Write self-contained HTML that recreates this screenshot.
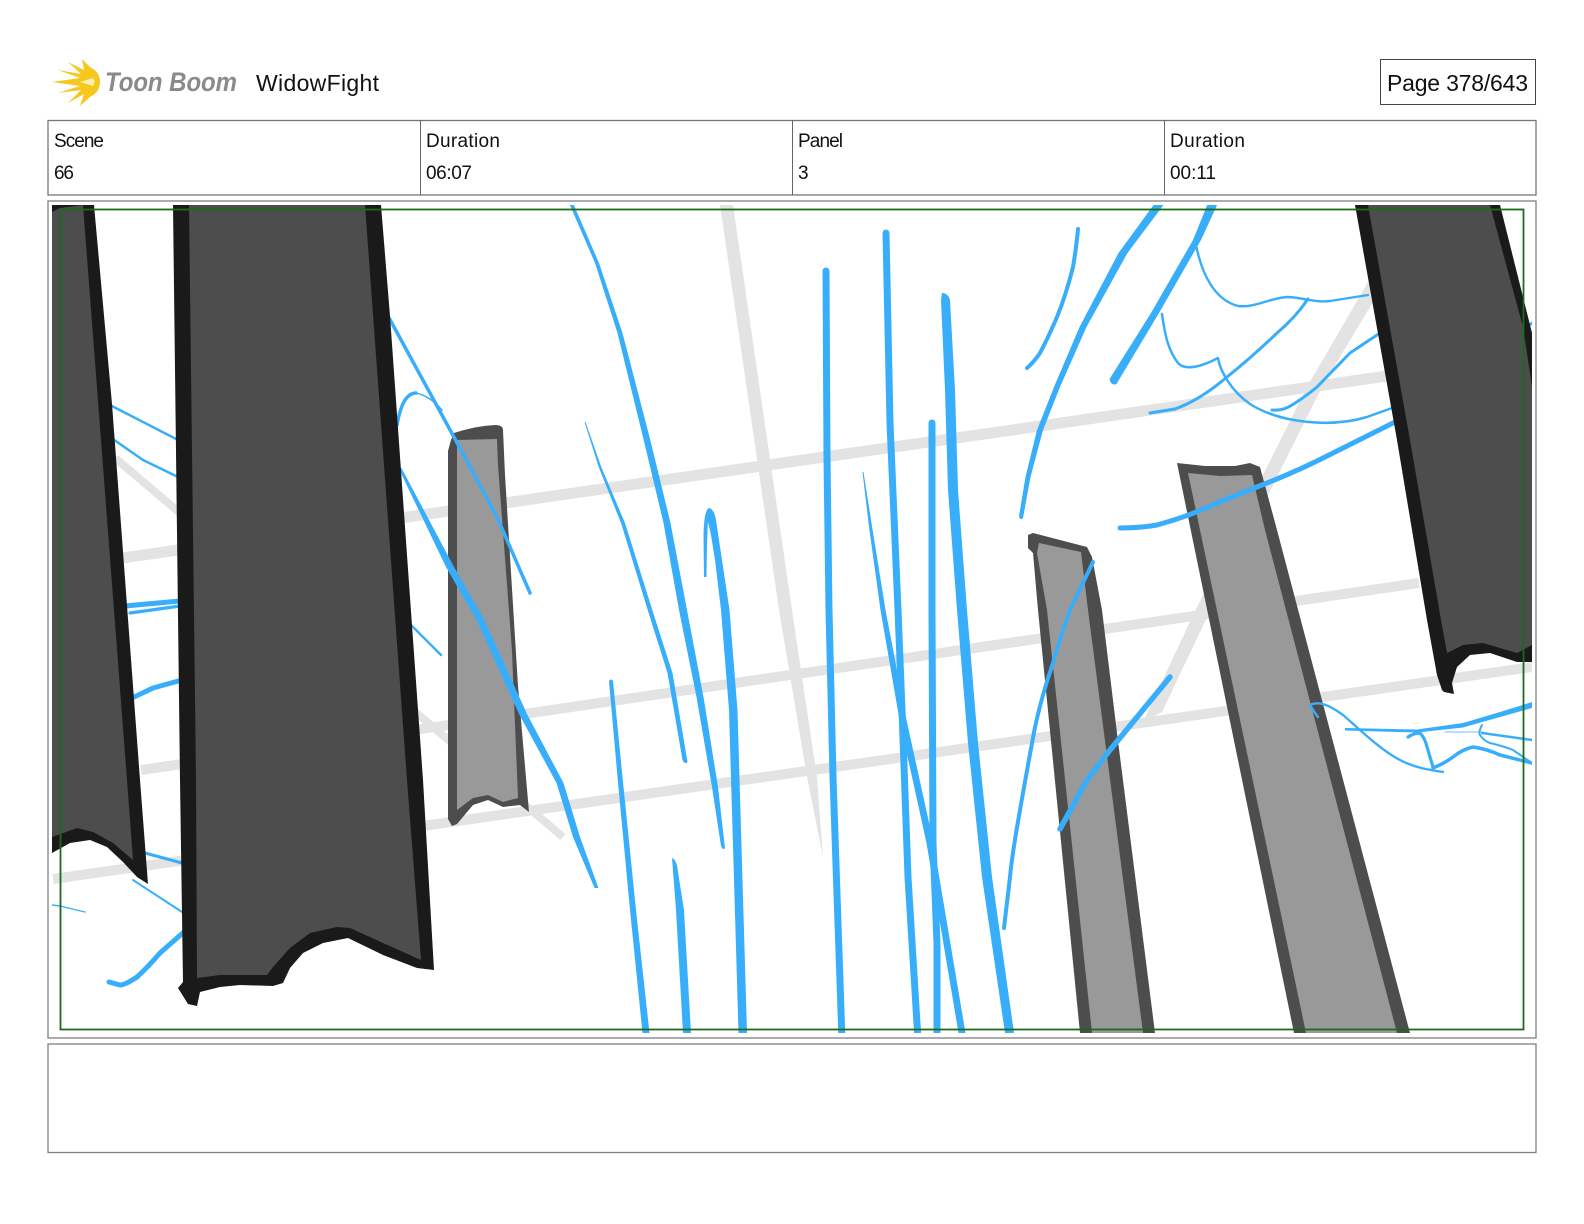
<!DOCTYPE html>
<html>
<head>
<meta charset="utf-8">
<title>WidowFight</title>
<style>
html,body{margin:0;padding:0;background:#fff;width:1584px;height:1224px;overflow:hidden}
svg{display:block}
text{font-family:"Liberation Sans",sans-serif;fill:#111}
</style>
</head>
<body>
<svg width="1584" height="1224" viewBox="0 0 1584 1224" xmlns="http://www.w3.org/2000/svg">
<defs><clipPath id="c"><rect x="52" y="205" width="1480" height="828"/></clipPath></defs>
<rect width="1584" height="1224" fill="#fff"/>

<!-- logo -->
<path d="M52,82 L80,78 L58,70 L81,74 L68,62 L84,70 L82,59 L90,67 Q100,72 100,82 Q100,92 90,97 L80,106 L84,94 L68,103 L81,90 L58,93 L80,86 Z" fill="#f6c71c"/>
<path d="M80,82 L93,78 Q96,82 93,86 Z" fill="#fdf0b0"/>
<text transform="translate(105,91) scale(1,1.1)" font-size="24" font-weight="bold" font-style="italic" textLength="132" style="fill:#8a8a8a">Toon Boom</text>
<text x="256" y="91" font-size="23" textLength="123">WidowFight</text>

<!-- page box -->
<rect x="1380.5" y="59.5" width="155" height="45" fill="#fff" stroke="#444" stroke-width="1"/>
<text x="1387" y="91" font-size="23" textLength="141">Page 378/643</text>

<!-- header table -->
<rect x="48" y="120.5" width="1488" height="74.5" fill="#fff" stroke="#777" stroke-width="1.3"/>
<path d="M420.5,120V195M792.5,120V195M1164.5,120V195" stroke="#666" stroke-width="1" fill="none"/>
<text x="54" y="147" font-size="19" textLength="50">Scene</text>
<text x="54" y="179" font-size="19" textLength="20">66</text>
<text x="426" y="147" font-size="19" textLength="74">Duration</text>
<text x="426" y="179" font-size="19" textLength="46">06:07</text>
<text x="798" y="147" font-size="19" textLength="45">Panel</text>
<text x="798" y="179" font-size="19">3</text>
<text x="1170" y="147" font-size="19" textLength="75">Duration</text>
<text x="1170" y="179" font-size="19" textLength="46">00:11</text>

<!-- frames -->
<rect x="48" y="201" width="1488" height="837" fill="#fff" stroke="#808080" stroke-width="1.3"/>
<rect x="48" y="1044" width="1488" height="108.5" fill="#fff" stroke="#808080" stroke-width="1.3"/>

<g clip-path="url(#c)">
  <!-- grey perspective guides -->
  <g fill="none" stroke="#e3e3e3">
    <path d="M53,568 L1394,375" stroke-width="11"/>
    <path d="M141,770 L1419,583" stroke-width="10"/>
    <path d="M53,879 L1532,667" stroke-width="10"/>
    <path d="M115,458 L563,837" stroke-width="8"/>
  </g>
  <polygon points="720,205 733,205 792,610 817,777 823,857 807,777 779,610" fill="#e3e3e3"/>
  <polygon points="1368,282 1385,282 1322,387 1210,611 1162,712 1143,722 1195,611 1307,387" fill="#e3e3e3"/>

  <!-- mid grey posts -->
  <path d="M454,433 Q475,426 495,425 Q503,425 503,430 L505,475 L518,686 L529,812 L520,805 L503,807 L488,800 L473,805 L457,824 L452,826 L448,819 L448,651 L448,451 L451,440 Z" fill="#4d4d4d"/>
  <path d="M457,440 L497,439 L498,465 L512,651 L518,798 L503,802 L488,795 L473,798 L457,810 L457,510 Z" fill="#999"/>
  <path d="M1028,535 L1033,533 L1087,547 L1092,557 L1102,610 L1117,733 L1155,1033 L1080,1033 L1038,610 L1033,553 L1028,548 Z" fill="#4d4d4d"/>
  <path d="M1039,543 L1081,552 L1088,610 L1143,1033 L1092,1033 L1047,610 L1037,553 Z" fill="#999"/>
  <path d="M1177,463 L1205,466 L1235,466 L1250,463 L1260,467 L1277,530 L1410,1033 L1294,1033 Z" fill="#4d4d4d"/>
  <path d="M1188,473 L1220,476 L1252,475 L1265,530 L1397,1033 L1306,1033 Z" fill="#999"/>

  <!-- blue strokes -->
  <g fill="#38aefb">
    <!-- tapered strokes as shapes -->
    <path d="M1155,203 L1118.5,253 L1079.5,327 L1054,387 L1037,430 L1025.5,477 L1019,516 Q1020,521 1023,518 L1030.5,477 L1043,430 L1060,387 L1086.5,327 L1127.5,253 L1165,203Z"/>
    <path d="M1208,203 L1193,240 L1151,313 L1109.5,379 Q1111,386 1116.5,384 L1159,313 L1201,240 L1218,203Z"/>
    <path d="M569,203 L595,263 L617.5,333 L643.7,440 L663.5,523 L679,610 L696.5,697 L712,787 L721,846 Q723,851 725,848 L718,787 L703.5,697 L687,610 L670.5,523 L650.3,440 L622.5,333 L599,263 L573,203Z"/>
    <path d="M584.5,422 L598.7,467 L621,523 L647.7,610 L667.5,673 L682.5,760 Q685,765 687.5,762 L672.5,673 L652.3,610 L625,523 L601.3,467 L585.5,422Z"/>
    <path d="M704,577 L703.5,535 Q704,510 709,508 Q714,509 716,520 L722,560 L729.5,610 L737.5,710 L747,1033 L738.5,1033 L729,710 L721,610 L715,560 L711,535 L708,522 Q707,535 706.5,577Z"/>
    <path d="M942,293 Q948,293 950,300 L955,390 L958,490 L967,610 L978,743 L992,877 L1014,1033 L1005,1033 L982,877 L968,743 L957,610 L948,490 L945,390 L941,300Z"/>
    <path d="M862.5,472 L868.5,523 L880.5,610 L899.5,720 L926.5,843 L958.5,1033 L965.5,1033 L933.5,843 L906.5,720 L885.5,610 L871.5,523 L863.5,472Z"/>
    <path d="M609,681 Q611,678 613,681 L622.5,777 L636,910 L649.5,1033 L642.5,1033 L630,910 L617.5,777Z"/>
    <path d="M672,858 Q677,860 678,872 L684,910 L691,1033 L683,1033 L676,910Z"/>
    <path d="M398.5,468 L446,567 L476,619 L519,714 L556.5,783 L573,837 L594.5,888 L598.5,888 L580,837 L563.5,783 L527,714 L484,619 L454,567 L401.5,468Z"/>
    <path d="M1345,728 L1417,729.5 L1463,723 L1500,712 L1532,702 L1532,708 L1500,717 L1463,727.5 L1417,732.5 L1345,730.5Z"/>
  </g>
  <g fill="none" stroke="#38aefb" stroke-linecap="round" stroke-linejoin="round">
    <!-- right fan -->
    <path d="M1078,229 Q1076,250 1073,267 Q1066,295 1057,317 Q1048,338 1040,353 Q1034,362 1027,368" stroke-width="4"/>
    <path d="M1196,245 C1202,275 1215,300 1238,306 C1255,308 1270,298 1287,297 C1300,297 1315,303 1330,301 L1368,295" stroke-width="2.4"/>
    <path d="M1308,299 Q1295,318 1277,333 Q1252,357 1227,377 Q1200,400 1175,409 L1150,413" stroke-width="3"/>
    <path d="M1162,314 C1165,335 1168,350 1178,363 C1186,372 1205,365 1218,358 C1220,370 1230,390 1250,404 C1280,423 1330,428 1367,417 L1392,408" stroke-width="2.5"/>
    <path d="M1272,410 Q1283,411 1292,405 Q1305,397 1317,387 L1350,353 L1380,333" stroke-width="3"/>
    <path d="M1120,528 Q1140,528 1157,525 Q1190,516 1217,503 L1267,483 Q1300,470 1333,453 L1395,422" stroke-width="5"/>
    <path d="M1527,327 L1532,323" stroke-width="3"/>
    <!-- lower right -->
    <path d="M1318,717 C1314,712 1312,708 1310,705 C1318,701 1328,704 1343,715 C1355,725 1380,750 1400,760 C1415,768 1430,770 1443,772" stroke-width="2.4"/>
    <path d="M1408,737 Q1414,733 1420,733 Q1425,738 1427,747 L1433,767" stroke-width="3.2"/>
    <path d="M1433,768 Q1445,763 1453,757 Q1463,749 1473,747 Q1487,749 1500,755 L1532,763" stroke-width="3.5"/>
    <path d="M1482,725 Q1478,733 1480,735 Q1484,741 1490,743 Q1503,746 1513,750 L1532,763" stroke-width="2"/>
    <path d="M1482,733 L1532,740" stroke-width="2.4"/>
    <path d="M1445,732 L1482,732" stroke-width="0.8"/>
    <!-- post B crossings -->
    <path d="M1093,562 L1070,610 Q1060,638 1053,663 Q1042,695 1035,727 Q1027,770 1020,810 Q1012,855 1010,877 L1004,928" stroke-width="4"/>
    <path d="M1060,829 L1087,780 L1110,750 L1170,677" stroke-width="5.5"/>
    <!-- middle verticals -->
    <path d="M886,233 L890,423 L898,610 L902,710 L908,877 L918,1040" stroke-width="7"/>
    <path d="M932,423 L932,610 L933,843 L937,943 L937,1040" stroke-width="7"/>
    <path d="M826,271 L827,457 L829,610 L833,777 L842,1040" stroke-width="7"/>
    <!-- across post A -->
    <path d="M388,316 L455,439 L497,517 L530,593" stroke-width="3.5"/>
    <path d="M397,425 Q400,408 405,400 Q410,393 416,393" stroke-width="3.5"/>
    <path d="M416,393 Q430,396 442,410" stroke-width="1.6"/>
    <path d="M410,624 L441,655" stroke-width="2.4"/>
    <!-- between left trees -->
    <path d="M108,404 L178,440" stroke-width="2.5"/>
    <path d="M110,437 L143,460 L178,477" stroke-width="2.5"/>
    <path d="M125,606 L180,601" stroke-width="5"/>
    <path d="M130,613 L180,606" stroke-width="3.2"/>
    <path d="M132,698 L153,688 L182,680" stroke-width="5"/>
    <path d="M145,853 L182,863" stroke-width="3"/>
    <path d="M133,880 L182,912" stroke-width="2"/>
    <path d="M52,905 L60,906 L85,912" stroke-width="1.4"/>
    <path d="M185,931 L160,953 Q147,968 137,977 Q125,985 120,985 L109,982" stroke-width="5"/>
  </g>

  <!-- dark trees -->
  <path d="M52,205 L94,205 L112,404 L140,780 L148,884 L137,877 L123,862 L107,847 L90,840 L70,843 L52,853 Z" fill="#1a1a1a"/>
  <path d="M52,212 L60,208 L83,205 L127,780 L133,860 L113,843 L93,832 L77,828 L52,837 Z" fill="#4d4d4d"/>

  <path d="M173,205 L381,205 L390,316 L423,780 L434,970 L417,968 L383,955 L348,938 L323,943 L303,953 L290,968 L283,983 L273,986 L240,985 L220,987 L200,992 L197,1006 L188,1004 L178,988 L183,982 L180,780 Z" fill="#1a1a1a"/>
  <path d="M189,205 L365,205 L407,780 L421,960 L383,943 L350,928 L337,927 L310,933 L290,948 L273,967 L267,975 L240,975 L220,975 L197,978 L196,780 Z" fill="#4d4d4d"/>

  <path d="M1355,205 L1500,205 L1532,333 L1532,662 L1517,662 L1490,653 L1470,655 L1457,667 L1452,683 L1454,694 L1444,692 L1442,690 L1437,675 L1427,620 L1397,440 Z" fill="#1a1a1a"/>
  <path d="M1368,205 L1490,205 L1523,327 L1532,387 L1532,645 L1517,653 L1483,643 L1463,645 L1447,653 L1441,620 L1410,440 Z" fill="#4d4d4d"/>
</g>

<!-- safe frame -->
<rect x="60.5" y="209.5" width="1463" height="820" fill="none" stroke="#1b6b1b" stroke-width="1.8"/>
</svg>
</body>
</html>
